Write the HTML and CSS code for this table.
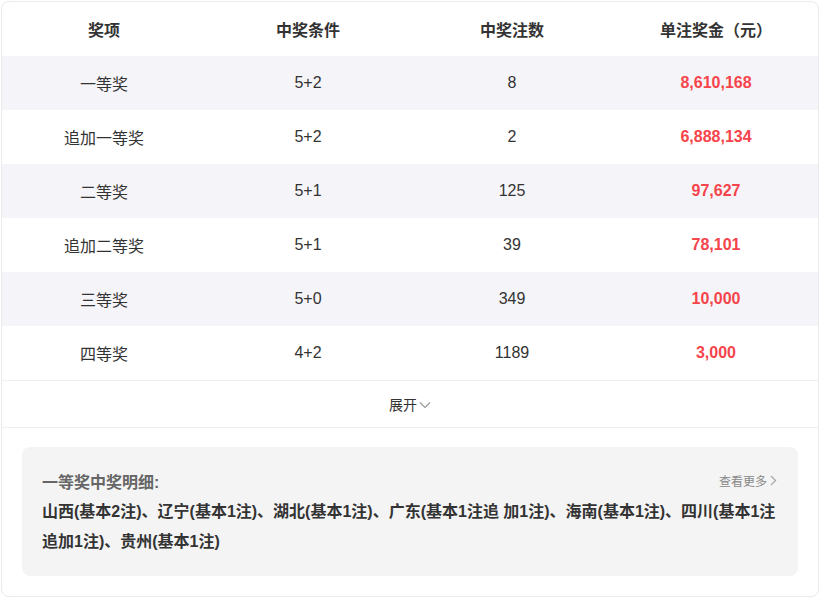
FILE: index.html
```html
<!DOCTYPE html>
<html lang="zh-CN">
<head>
<meta charset="utf-8">
<title>开奖详情</title>
<link rel="stylesheet" href="styles.css">
</head>
<body>
<div class="card">
  <div class="table">
    <div class="row head">
      <div class="cell">奖项</div>
      <div class="cell">中奖条件</div>
      <div class="cell">中奖注数</div>
      <div class="cell">单注奖金（元）</div>
    </div>
    <div class="row alt">
      <div class="cell">一等奖</div>
      <div class="cell">5+2</div>
      <div class="cell">8</div>
      <div class="cell money">8,610,168</div>
    </div>
    <div class="row">
      <div class="cell">追加一等奖</div>
      <div class="cell">5+2</div>
      <div class="cell">2</div>
      <div class="cell money">6,888,134</div>
    </div>
    <div class="row alt">
      <div class="cell">二等奖</div>
      <div class="cell">5+1</div>
      <div class="cell">125</div>
      <div class="cell money">97,627</div>
    </div>
    <div class="row">
      <div class="cell">追加二等奖</div>
      <div class="cell">5+1</div>
      <div class="cell">39</div>
      <div class="cell money">78,101</div>
    </div>
    <div class="row alt">
      <div class="cell">三等奖</div>
      <div class="cell">5+0</div>
      <div class="cell">349</div>
      <div class="cell money">10,000</div>
    </div>
    <div class="row">
      <div class="cell">四等奖</div>
      <div class="cell">4+2</div>
      <div class="cell">1189</div>
      <div class="cell money">3,000</div>
    </div>
  </div>
  <div class="expand">
    <span>展开</span>
    <svg class="chev-down" width="12" height="8" viewBox="0 0 12 8"><path d="M1 1.5 L6 6.5 L11 1.5" fill="none" stroke="#999" stroke-width="1.2"/></svg>
  </div>
  <div class="detail">
    <div class="detail-head">
      <span class="detail-title">一等奖中奖明细:</span>
      <span class="more">查看更多<svg class="chev-right" width="7" height="11" viewBox="0 0 7 11"><path d="M1 1 L5.5 5.5 L1 10" fill="none" stroke="#aaa" stroke-width="1.3"/></svg></span>
    </div>
    <div class="detail-text">山西(基本2注)、辽宁(基本1注)、湖北(基本1注)、广东(基本1注追 加1注)、海南(基本1注)、四川(基本1注追加1注)、贵州(基本1注)</div>
  </div>
</div>
</body>
</html>
```
FILE: styles.css
```css
* { box-sizing: border-box; }
html, body {
  margin: 0;
  padding: 0;
  background: #ffffff;
}
body {
  font-family: "Liberation Sans", "Noto Sans CJK SC", sans-serif;
  color: #333;
  padding: 1px;
}
.card {
  width: 818px;
  height: 596px;
  border: 1px solid #ebebeb;
  border-radius: 8px;
  background: #fff;
  overflow: hidden;
}
.row {
  display: grid;
  grid-template-columns: repeat(4, 1fr);
  height: 54px;
  align-items: center;
}
.row.alt { background: #f5f5f9; }
.cell {
  text-align: center;
  font-size: 16px;
  color: #333;
  margin-top: -1px;
}
.head .cell {
  font-weight: bold;
  color: #333;
}
.money {
  color: #f5444b;
  font-weight: bold;
}
.expand {
  height: 48px;
  border-top: 1px solid #efefef;
  border-bottom: 1px solid #efefef;
  display: flex;
  align-items: center;
  justify-content: center;
  gap: 2px;
  font-size: 14px;
  color: #333;
}
.chev-down { margin-top: 1px; }
.detail {
  margin: 19px 20px 0 20px;
  background: #f4f4f4;
  border-radius: 8px;
  padding: 19px 20px 19px 20px;
}
.detail-head {
  display: flex;
  justify-content: space-between;
  align-items: center;
  height: 31px;
  margin-top: -1px;
}
.detail-title {
  font-size: 16px;
  font-weight: bold;
  color: #666;
}
.more {
  font-size: 12px;
  color: #888;
  display: flex;
  align-items: center;
  gap: 3px;
  margin-right: 1px;
}
.detail-text {
  font-size: 16px;
  font-weight: bold;
  line-height: 30px;
  color: #333;
  margin-top: 1px;
}
```
